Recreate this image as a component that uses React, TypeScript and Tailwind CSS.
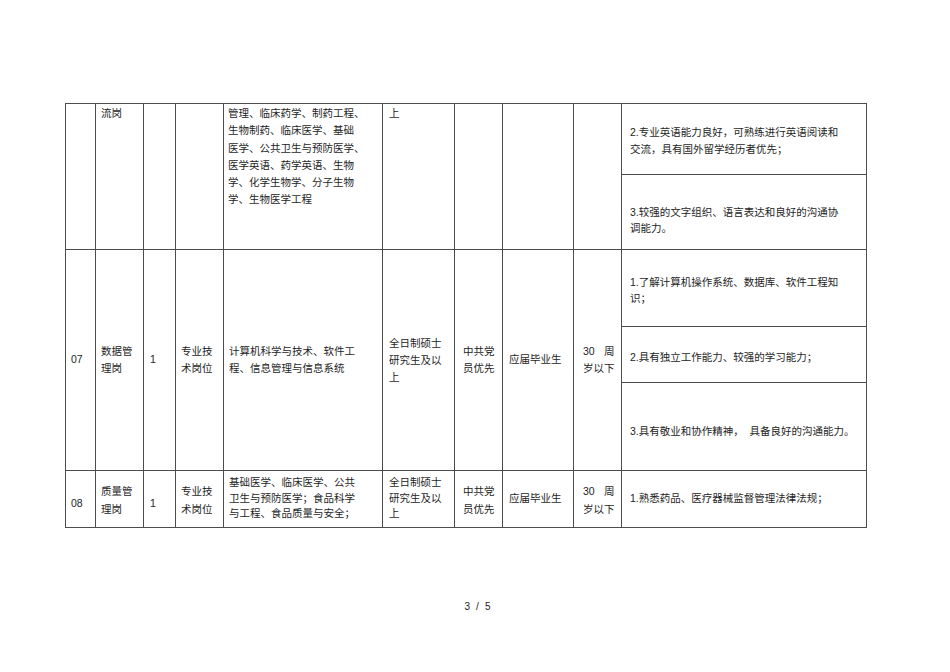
const FONT = "font-['Liberation_Sans','Noto_Sans_CJK_SC',sans-serif]";

function Lines({ lines, lh = "leading-[17px]" }: { lines: string[]; lh?: string }) {
  return (
    <div className={lh}>
      {lines.map((l, i) => (
        <div key={i} className="whitespace-pre">{l}</div>
      ))}
    </div>
  );
}

function Age({ lh = "leading-[17px]" }: { lh?: string }) {
  return (
    <div className={`${lh} w-[31.5px]`}>
      <div className="flex justify-between"><span>30</span><span>周</span></div>
      <div>岁以下</div>
    </div>
  );
}

const td = "border border-[#4d4d4d] align-top p-0";

export default function App() {
  return (
    <div className={`w-[950px] h-[672px] bg-white text-[#1e1e1e] text-[10.5px] ${FONT}`}>
      <div className="pt-[103px] pl-[65px]">
        <table className="border-collapse table-fixed w-[801px]">
          <colgroup>
            <col className="w-[30px]" />
            <col className="w-[48px]" />
            <col className="w-[32px]" />
            <col className="w-[48px]" />
            <col className="w-[159px]" />
            <col className="w-[72px]" />
            <col className="w-[48px]" />
            <col className="w-[71px]" />
            <col className="w-[48px]" />
            <col className="w-[245px]" />
          </colgroup>
          <tbody>
            {/* continued row from previous page */}
            <tr className="h-[71px]">
              <td rowSpan={2} className={td}></td>
              <td rowSpan={2} className={`${td} pl-[5px] pt-[1px]`}><Lines lines={["流岗"]} /></td>
              <td rowSpan={2} className={td}></td>
              <td rowSpan={2} className={td}></td>
              <td rowSpan={2} className={`${td} pl-[4px] pt-[1px]`}>
                <Lines
                  lh="leading-[17.3px]"
                  lines={[
                    "管理、临床药学、制药工程、",
                    "生物制药、临床医学、基础",
                    "医学、公共卫生与预防医学、",
                    "医学英语、药学英语、生物",
                    "学、化学生物学、分子生物",
                    "学、生物医学工程",
                  ]}
                />
              </td>
              <td rowSpan={2} className={`${td} pl-[6px] pt-[1px]`}><Lines lines={["上"]} /></td>
              <td rowSpan={2} className={td}></td>
              <td rowSpan={2} className={td}></td>
              <td rowSpan={2} className={td}></td>
              <td className={`${td} pl-[8px] pt-[20px]`}>
                <Lines lh="leading-[16.5px]" lines={["2.专业英语能力良好，可熟练进行英语阅读和", "交流，具有国外留学经历者优先；"]} />
              </td>
            </tr>
            <tr className="h-[75px]">
              <td className={`${td} pl-[8px] pt-[30px]`}>
                <Lines lh="leading-[15.5px]" lines={["3.较强的文字组织、语言表达和良好的沟通协", "调能力。"]} />
              </td>
            </tr>

            {/* 07 */}
            <tr className="h-[77px]">
              <td rowSpan={3} className={`${td} !align-middle pl-[5px]`}>07</td>
              <td rowSpan={3} className={`${td} !align-middle pl-[5px]`}><Lines lines={["数据管", "理岗"]} /></td>
              <td rowSpan={3} className={`${td} !align-middle pl-[6px]`}>1</td>
              <td rowSpan={3} className={`${td} !align-middle pl-[5px]`}><Lines lines={["专业技", "术岗位"]} /></td>
              <td rowSpan={3} className={`${td} !align-middle pl-[5px]`}>
                <Lines lines={["计算机科学与技术、软件工", "程、信息管理与信息系统"]} />
              </td>
              <td rowSpan={3} className={`${td} !align-middle pl-[6px]`}>
                <Lines lines={["全日制硕士", "研究生及以", "上"]} />
              </td>
              <td rowSpan={3} className={`${td} !align-middle pl-[8px]`}><Lines lines={["中共党", "员优先"]} /></td>
              <td rowSpan={3} className={`${td} !align-middle pl-[6px]`}>应届毕业生</td>
              <td rowSpan={3} className={`${td} !align-middle pl-[9px]`}><Age /></td>
              <td className={`${td} pl-[8px] pt-[24px]`}>
                <Lines lh="leading-[16px]" lines={["1.了解计算机操作系统、数据库、软件工程知", "识；"]} />
              </td>
            </tr>
            <tr className="h-[56px]">
              <td className={`${td} pl-[8px] pt-[22px]`}>
                <Lines lh="leading-[16px]" lines={["2.具有独立工作能力、较强的学习能力；"]} />
              </td>
            </tr>
            <tr className="h-[88px]">
              <td className={`${td} pl-[8px] pt-[40px]`}>
                <Lines lh="leading-[16px]" lines={["3.具有敬业和协作精神，  具备良好的沟通能力。"]} />
              </td>
            </tr>

            {/* 08 */}
            <tr className="h-[57px]">
              <td className={`${td} pl-[5px] pt-[24px]`}><Lines lines={["08"]} /></td>
              <td className={`${td} pl-[5px] pt-[11px]`}><Lines lh="leading-[18px]" lines={["质量管", "理岗"]} /></td>
              <td className={`${td} pl-[6px] pt-[24px]`}><Lines lines={["1"]} /></td>
              <td className={`${td} pl-[5px] pt-[11px]`}><Lines lh="leading-[18px]" lines={["专业技", "术岗位"]} /></td>
              <td className={`${td} pl-[5px] pt-[4px]`}>
                <Lines
                  lh="leading-[15.7px]"
                  lines={["基础医学、临床医学、公共", "卫生与预防医学；食品科学", "与工程、食品质量与安全；"]}
                />
              </td>
              <td className={`${td} pl-[6px] pt-[4px]`}>
                <Lines lh="leading-[15.7px]" lines={["全日制硕士", "研究生及以", "上"]} />
              </td>
              <td className={`${td} pl-[8px] pt-[11px]`}><Lines lh="leading-[18px]" lines={["中共党", "员优先"]} /></td>
              <td className={`${td} pl-[6px] pt-[20px]`}>应届毕业生</td>
              <td className={`${td} pl-[9px] pt-[11px]`}><Age lh="leading-[18px]" /></td>
              <td className={`${td} pl-[8px] pt-[20px]`}>1.熟悉药品、医疗器械监督管理法律法规；</td>
            </tr>
          </tbody>
        </table>
      </div>

      {/* page number */}
      <div className="mt-[73px] flex justify-center pl-[5px] text-[10px] leading-[12px] text-[#222] gap-[6px]">
        <span>3</span>
        <span>/</span>
        <span>5</span>
      </div>
    </div>
  );
}
